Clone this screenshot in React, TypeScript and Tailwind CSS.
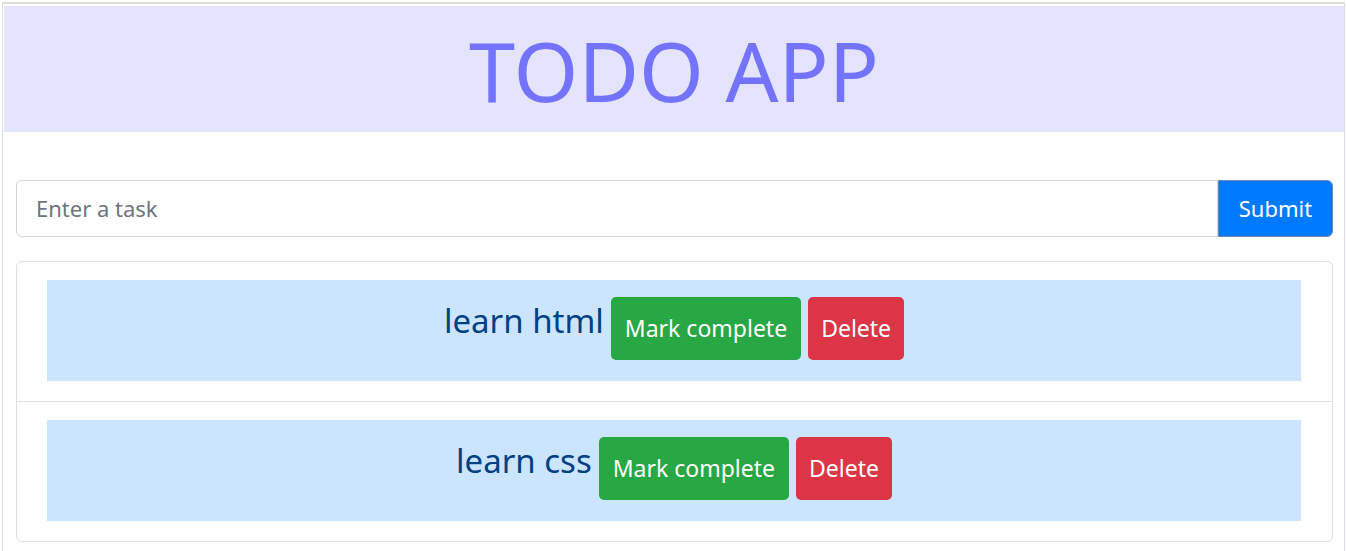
const tasks = ['learn html', 'learn css']

function TaskItem({ text, last }: { text: string; last: boolean }) {
  return (
    <li className={`pl-[30px] pr-[31px] pt-[18px] pb-[20px] ${last ? '' : 'border-b border-[#dfdfdf]'}`}>
      <div className="flex h-[101px] items-start justify-center gap-[7px] bg-[#cce5ff] pt-[17px]">
        <span className="mt-[4px] text-[33px] leading-[40px] text-[#004085]">{text}</span>
        <button className="h-[63px] rounded-[5px] bg-[#28a745] px-[14px] text-[23px] text-white">
          Mark complete
        </button>
        <button className="h-[63px] rounded-[5px] bg-[#dc3545] px-[13px] text-[23px] text-white">
          Delete
        </button>
      </div>
    </li>
  )
}

export default function App() {
  return (
    <div className="min-h-screen bg-white pt-[2px] pl-[2px] pr-[1px] font-['Noto_Sans','Open_Sans',sans-serif]">
      <div className="min-h-[549px] border-x border-t-2 border-x-[#dcdce8] border-t-[#dcdcdc] pt-[2px] pl-[1px]">
        <header className="flex h-[126px] items-center justify-center bg-[#e4e4ff]">
          <h1 className="mt-[1px] text-[83px] leading-none text-[#7373ff]">TODO APP</h1>
        </header>

        <main className="pl-[12px] pr-[11px] pt-[48px]">
          <form className="flex h-[57px]" onSubmit={(e) => e.preventDefault()}>
            <input
              className="flex-1 rounded-l-[6px] border border-[#ced4da] px-[19px] text-[22px] text-[#495057] outline-none placeholder:text-[#6c757d]"
              placeholder="Enter a task"
            />
            <button className="w-[115px] rounded-r-[6px] border border-[#6c8ab0] bg-[#007bff] text-[22px] text-white">
              Submit
            </button>
          </form>

          <ul className="mt-[24px] rounded-[6px] border border-[#dfdfdf]">
            {tasks.map((t, i) => (
              <TaskItem key={t} text={t} last={i === tasks.length - 1} />
            ))}
          </ul>
        </main>
      </div>
    </div>
  )
}
